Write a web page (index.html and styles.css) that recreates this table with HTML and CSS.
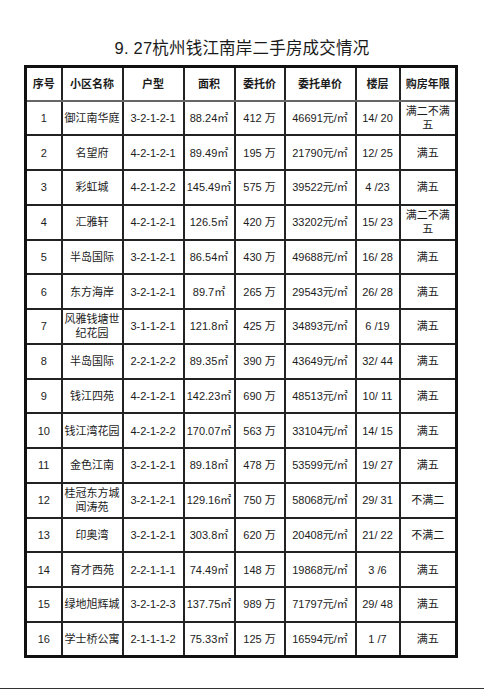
FILE: index.html
```html
<!DOCTYPE html>
<html lang="zh">
<head>
<meta charset="utf-8">
<link rel="stylesheet" href="styles.css">
</head>
<body>
<div class="page">
  <h1 class="title">9. 27杭州钱江南岸二手房成交情况</h1>
  <table class="deals">
    <colgroup>
      <col class="c1"><col class="c2"><col class="c3"><col class="c4"><col class="c5"><col class="c6"><col class="c7"><col class="c8">
    </colgroup>
    <thead>
      <tr><th>序号</th><th>小区名称</th><th>户型</th><th>面积</th><th>委托价</th><th>委托单价</th><th>楼层</th><th>购房年限</th></tr>
    </thead>
    <tbody>
      <tr><td>1</td><td>御江南华庭</td><td>3-2-1-2-1</td><td>88.24㎡</td><td>412 万</td><td>46691元/㎡</td><td>14/ 20</td><td class="term">满二不满五</td></tr>
      <tr><td>2</td><td>名望府</td><td>4-2-1-2-1</td><td>89.49㎡</td><td>195 万</td><td>21790元/㎡</td><td>12/ 25</td><td class="term">满五</td></tr>
      <tr><td>3</td><td>彩虹城</td><td>4-2-1-2-2</td><td>145.49㎡</td><td>575 万</td><td>39522元/㎡</td><td>4 /23</td><td class="term">满五</td></tr>
      <tr><td>4</td><td>汇雅轩</td><td>4-2-1-2-1</td><td>126.5㎡</td><td>420 万</td><td>33202元/㎡</td><td>15/ 23</td><td class="term">满二不满五</td></tr>
      <tr><td>5</td><td>半岛国际</td><td>3-2-1-2-1</td><td>86.54㎡</td><td>430 万</td><td>49688元/㎡</td><td>16/ 28</td><td class="term">满五</td></tr>
      <tr><td>6</td><td>东方海岸</td><td>3-2-1-2-1</td><td>89.7㎡</td><td>265 万</td><td>29543元/㎡</td><td>26/ 28</td><td class="term">满五</td></tr>
      <tr><td>7</td><td>风雅钱塘世纪花园</td><td>3-1-1-2-1</td><td>121.8㎡</td><td>425 万</td><td>34893元/㎡</td><td>6 /19</td><td class="term">满五</td></tr>
      <tr><td>8</td><td>半岛国际</td><td>2-2-1-2-2</td><td>89.35㎡</td><td>390 万</td><td>43649元/㎡</td><td>32/ 44</td><td class="term">满五</td></tr>
      <tr><td>9</td><td>钱江四苑</td><td>4-2-1-2-1</td><td>142.23㎡</td><td>690 万</td><td>48513元/㎡</td><td>10/ 11</td><td class="term">满五</td></tr>
      <tr><td>10</td><td>钱江湾花园</td><td>4-2-1-2-2</td><td>170.07㎡</td><td>563 万</td><td>33104元/㎡</td><td>14/ 15</td><td class="term">满五</td></tr>
      <tr><td>11</td><td>金色江南</td><td>3-2-1-2-1</td><td>89.18㎡</td><td>478 万</td><td>53599元/㎡</td><td>19/ 27</td><td class="term">满五</td></tr>
      <tr><td>12</td><td>桂冠东方城闻涛苑</td><td>3-2-1-2-1</td><td>129.16㎡</td><td>750 万</td><td>58068元/㎡</td><td>29/ 31</td><td class="term">不满二</td></tr>
      <tr><td>13</td><td>印奥湾</td><td>3-2-1-2-1</td><td>303.8㎡</td><td>620 万</td><td>20408元/㎡</td><td>21/ 22</td><td class="term">不满二</td></tr>
      <tr><td>14</td><td>育才西苑</td><td>2-2-1-1-1</td><td>74.49㎡</td><td>148 万</td><td>19868元/㎡</td><td>3 /6</td><td class="term">满五</td></tr>
      <tr><td>15</td><td>绿地旭辉城</td><td>3-2-1-2-3</td><td>137.75㎡</td><td>989 万</td><td>71797元/㎡</td><td>29/ 48</td><td class="term">满五</td></tr>
      <tr><td>16</td><td>学士桥公寓</td><td>2-1-1-1-2</td><td>75.33㎡</td><td>125 万</td><td>16594元/㎡</td><td>1 /7</td><td class="term">满五</td></tr>
    </tbody>
  </table>
  <div class="rule"></div>
</div>
</body>
</html>
```

FILE: styles.css
```css
html, body {
  margin: 0;
  padding: 0;
  background: #ffffff;
}
.page {
  width: 484px;
  height: 690px;
  overflow: hidden;
  display: flex;
  flex-direction: column;
  font-family: "Liberation Sans", "Noto Sans CJK SC", sans-serif;
  color: #1c1c1c;
}
.title {
  margin: 0;
  padding-top: 37px;
  height: 28px;
  font-size: 16.5px;
  font-weight: normal;
  line-height: 22px;
  text-align: center;
  letter-spacing: 0.2px;
  color: #1a1a1a;
}
.deals {
  margin-left: 24px;
  width: 431px;
  table-layout: fixed;
  border-collapse: collapse;
  border: 3px solid #111;
  font-size: 11px;
}
.c1 { width: 36px; }
.c2 { width: 61px; }
.c3 { width: 61px; }
.c4 { width: 51px; }
.c5 { width: 50px; }
.c6 { width: 71px; }
.c7 { width: 44px; }
.c8 { width: 57px; }
.deals th, .deals td {
  border: 2px solid #222;
  padding: 0;
  text-align: center;
  vertical-align: middle;
  line-height: 14px;
}
.deals td.term {
  padding: 0 3px;
}
.deals thead tr { height: 34px; }
.deals th {
  font-weight: bold;
  font-size: 11px;
  border-bottom-color: #666;
}
.deals tbody tr { height: 34.75px; }
.deals tbody td { border-top-color: #444; }
.rule {
  margin-top: auto;
  margin-bottom: 1px;
  height: 0;
  border-top: 1.5px solid #333;
}
```
